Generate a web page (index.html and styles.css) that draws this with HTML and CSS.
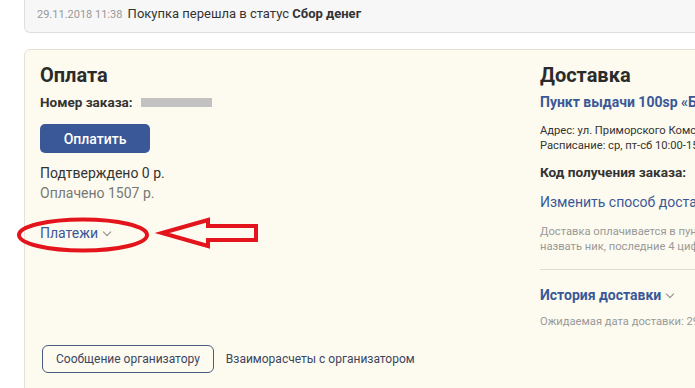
FILE: index.html
```html
<!DOCTYPE html>
<html lang="ru">
<head>
    <meta charset="UTF-8">
    <meta name="viewport" content="width=device-width, initial-scale=1.0">
    <title>Покупка</title>
    <link rel="stylesheet" href="styles.css">
</head>
<body>
    <div class="page">
        <div class="status-card">
            <span class="status-date">29.11.2018 11:38</span>
            Покупка перешла в статус <b>Сбор денег</b>
        </div>

        <div class="order-card">
            <div class="order-grid">
                <div class="payment">
                    <h2>Оплата</h2>
                    <div class="order-number">Номер заказа: <span class="masked"></span></div>
                    <button class="pay-button">Оплатить</button>
                    <div class="confirmed">Подтверждено 0 р.</div>
                    <div class="paid">Оплачено 1507 р.</div>
                    <a class="toggle payments-link">Платежи <span class="chevron"></span></a>
                </div>

                <div class="delivery">
                    <h2>Доставка</h2>
                    <a class="pickup-point">Пункт выдачи 100sp «Бульвар Приморского Комсомола»</a>
                    <div class="small-info">
                        <div>Адрес: ул. Приморского Комсомола, 12</div>
                        <div>Расписание: ср, пт-сб 10:00-15:00</div>
                    </div>
                    <div class="pickup-code">Код получения заказа:</div>
                    <a class="change-link">Изменить способ доставки</a>
                    <div class="small-info muted note">
                        <div>Доставка оплачивается в пункте выдачи. Необходимо</div>
                        <div>назвать ник, последние 4 цифры телефона</div>
                    </div>
                    <div class="divider"></div>
                    <a class="toggle history-link">История доставки <span class="chevron"></span></a>
                    <div class="small-info muted expected">Ожидаемая дата доставки: 29.12.2018</div>
                </div>
            </div>

            <div class="order-footer">
                <button class="outline-button">Сообщение организатору</button>
                <a class="footer-link">Взаиморасчеты с организатором</a>
            </div>
        </div>

        <!-- пометка поверх скриншота -->
        <svg class="annotation" width="300" height="60" viewBox="0 0 300 60">
            <ellipse cx="83" cy="35" rx="64" ry="15.5" fill="none" stroke="#e3141b" stroke-width="4"/>
            <polygon points="162,33 208,20 208,26 256,26 256,40 208,40 208,46" fill="none" stroke="#e3141b" stroke-width="4" stroke-linejoin="miter"/>
        </svg>
    </div>
</body>
</html>
```

FILE: styles.css
```css
body {
    margin: 0;
    font-family: Roboto, "Liberation Sans", sans-serif;
    font-size: 13px;
    color: #333;
    background: #fff;
    overflow: hidden;
}

.page {
    position: relative;
    padding-left: 24px;
}

.status-card {
    width: 900px;
    background-color: #f7f7f7;
    border: 1px solid #dedede;
    border-top: none;
    border-radius: 0 0 6px 6px;
    padding: 4px 12px 8px;
    line-height: 19px;
}

.status-date {
    font-size: 11px;
    color: #999;
    margin-right: 2px;
}

.order-card {
    width: 900px;
    margin-top: 16px;
    background-color: #fdfbef;
    border: 1px solid #e6e2d3;
    border-radius: 6px;
    padding: 13px 15px 30px;
}

.order-grid {
    display: grid;
    grid-template-columns: 500px 1fr;
}

h2 {
    margin: 0 0 6px;
    font-size: 20px;
    line-height: 24px;
    font-weight: 700;
    color: #2b2b2b;
}

.order-number {
    font-weight: 700;
    font-size: 13.5px;
    line-height: 18px;
    display: flex;
    align-items: center;
    gap: 8px;
}

.masked {
    display: inline-block;
    width: 71px;
    height: 9px;
    background: #c2c2c2;
}

.pay-button {
    display: block;
    margin: 13px 0 10px;
    width: 110px;
    height: 29px;
    border: none;
    border-radius: 5px;
    background-color: #3a5898;
    color: #fff;
    font-family: inherit;
    font-size: 14px;
    font-weight: 500;
}

.confirmed {
    font-size: 14px;
    line-height: 20px;
}

.paid {
    font-size: 14px;
    line-height: 20px;
    color: #777;
}

.toggle {
    display: inline-flex;
    align-items: center;
    gap: 6px;
    color: #3a5898;
    font-size: 14px;
}

.payments-link {
    margin-top: 20px;
    line-height: 20px;
}

.chevron {
    width: 5px;
    height: 5px;
    border-right: 1px solid #8a8a8a;
    border-bottom: 1px solid #8a8a8a;
    transform: rotate(45deg);
    margin-top: -3px;
}

.pickup-point {
    display: block;
    color: #3a5898;
    font-weight: 700;
    font-size: 14px;
    white-space: nowrap;
    line-height: 18px;
}

.small-info {
    font-size: 11.2px;
    line-height: 15px;
    white-space: nowrap;
    margin-top: 12px;
}

.muted {
    color: #999;
}

.pickup-code {
    font-weight: 700;
    font-size: 13.6px;
    margin-top: 10px;
    line-height: 18px;
}

.change-link {
    display: block;
    color: #3a5898;
    font-size: 14px;
    margin-top: 12px;
    line-height: 18px;
    white-space: nowrap;
}

.note {
    margin-top: 13px;
}

.divider {
    border-top: 1px solid #e0ddd0;
    margin-top: 15px;
}

.history-link {
    margin-top: 16px;
    font-weight: 700;
    line-height: 18px;
}

.expected {
    margin-top: 10px;
}

.order-footer {
    display: flex;
    align-items: center;
    gap: 12px;
    margin-top: 16px;
    padding-left: 2px;
}

.outline-button {
    height: 28px;
    padding: 0 13px;
    border: 1px solid #4a5c80;
    border-radius: 6px;
    background: transparent;
    color: #3a4560;
    font-family: inherit;
    font-size: 12px;
}

.footer-link {
    color: #3a4560;
    font-size: 12px;
}

.annotation {
    position: absolute;
    left: 0;
    top: 200px;
}
```
